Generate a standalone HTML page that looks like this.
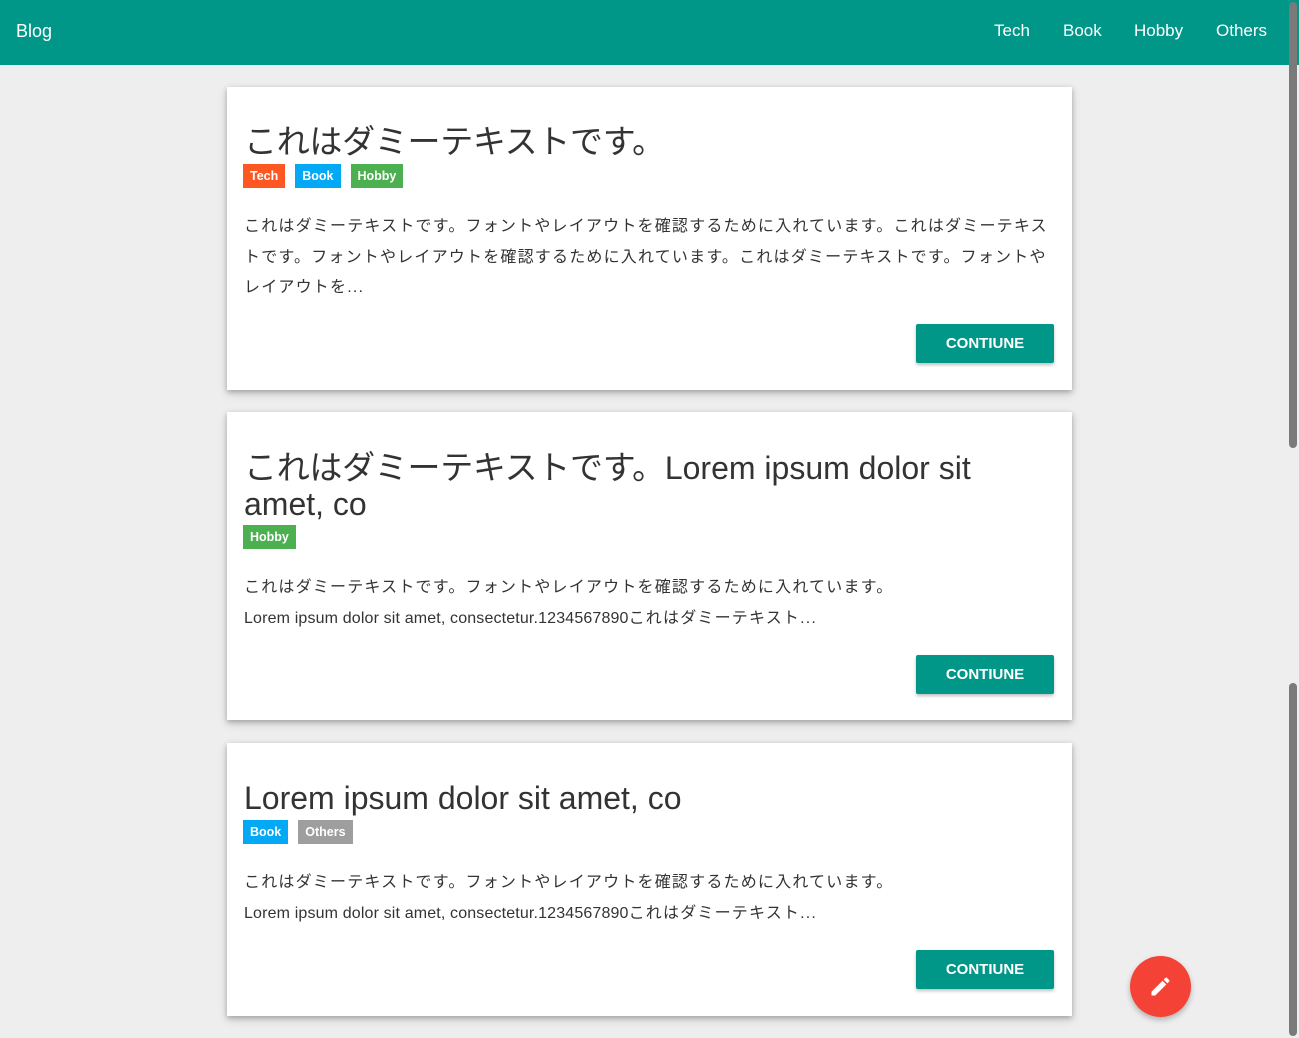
<!DOCTYPE html>
<html><head><meta charset="utf-8"><style>
*{margin:0;padding:0;box-sizing:border-box}
body{width:1299px;height:1038px;overflow:hidden;background:#eeeeee;font-family:"Liberation Sans","Noto Sans CJK JP",sans-serif;position:relative}
.hd{position:absolute;left:0;top:0;width:1299px;height:65px;background:#009688;color:#fff;font-size:18px}
.hd .logo{position:absolute;left:16px;top:21px}
.hd .nav{position:absolute;top:21px;font-size:17px}
.card{position:absolute;left:227px;width:845px;background:#fff;box-shadow:0 2px 5px rgba(0,0,0,.25),0 4px 10px rgba(0,0,0,.12)}
.t{position:absolute;left:17px;font-size:32px;color:#333;line-height:36px;width:780px}
.t .j{font-family:"Noto Sans CJK JP",sans-serif;font-weight:400;font-size:33px;letter-spacing:-0.3px}
.tags{position:absolute;left:16px;height:24px;display:flex;gap:10px}
.tag{height:24px;padding:0 7px;color:#fff;font-size:12.5px;font-weight:bold;line-height:24px}
.b{position:absolute;left:17px;font-size:16px;color:#333;line-height:30.5px;width:812px;letter-spacing:1.2px}
.b .l{letter-spacing:0.15px}
.btn{position:absolute;left:689px;width:138px;height:39px;background:#009688;color:#fff;font-weight:bold;font-size:15px;text-align:center;line-height:39px;box-shadow:0 2px 3px rgba(0,0,0,.25);border-radius:2px}
.sb{position:absolute;left:1289px;width:8px;background:#7a7a7a;border-radius:4px}
</style></head><body>
<div class="hd"><span class="logo">Blog</span>
<span class="nav" style="left:994px">Tech</span><span class="nav" style="left:1063px">Book</span><span class="nav" style="left:1134px">Hobby</span><span class="nav" style="left:1216px">Others</span></div>

<div class="card" style="top:87px;height:303px">
<div class="t" style="top:34px"><span class="j">これはダミーテキストです。</span></div>
<div class="tags" style="top:77px"><span class="tag" style="background:#ff5722">Tech</span><span class="tag" style="background:#03a9f4">Book</span><span class="tag" style="background:#4caf50">Hobby</span></div>
<div class="b" style="top:125px">これはダミーテキストです。フォントやレイアウトを確認するために入れています。これはダミーテキストです。フォントやレイアウトを確認するために入れています。これはダミーテキストです。フォントやレイアウトを...</div>
<div class="btn" style="top:237px">CONTIUNE</div>
</div>

<div class="card" style="top:412px;height:308px">
<div class="t" style="top:35px"><span class="j">これはダミーテキストです。</span>Lorem ipsum dolor sit amet, co</div>
<div class="tags" style="top:113px"><span class="tag" style="background:#4caf50">Hobby</span></div>
<div class="b" style="top:161px">これはダミーテキストです。フォントやレイアウトを確認するために入れています。<br><span class="l">Lorem ipsum dolor sit amet, consectetur.1234567890</span>これはダミーテキスト...</div>
<div class="btn" style="top:243px">CONTIUNE</div>
</div>

<div class="card" style="top:743px;height:273px">
<div class="t" style="top:37px">Lorem ipsum dolor sit amet, co</div>
<div class="tags" style="top:77px"><span class="tag" style="background:#03a9f4">Book</span><span class="tag" style="background:#9e9e9e">Others</span></div>
<div class="b" style="top:125px">これはダミーテキストです。フォントやレイアウトを確認するために入れています。<br><span class="l">Lorem ipsum dolor sit amet, consectetur.1234567890</span>これはダミーテキスト...</div>
<div class="btn" style="top:207px">CONTIUNE</div>
</div>

<div style="position:absolute;left:1130px;top:956px;width:61px;height:61px;border-radius:50%;background:#f44336;box-shadow:0 3px 6px rgba(0,0,0,.25)">
<svg width="61" height="61" viewBox="0 0 61 61"><g transform="translate(18.5,18.5)"><path d="M3 17.25V21h3.75L17.81 9.94l-3.75-3.75L3 17.25zM20.71 7.04a1 1 0 0 0 0-1.41l-2.34-2.34a1 1 0 0 0-1.41 0l-1.83 1.83 3.75 3.75 1.83-1.83z" fill="#fff"/></g></svg></div>

<div class="sb" style="top:2px;height:446px"></div>
<div class="sb" style="top:683px;height:353px"></div>
</body></html>
